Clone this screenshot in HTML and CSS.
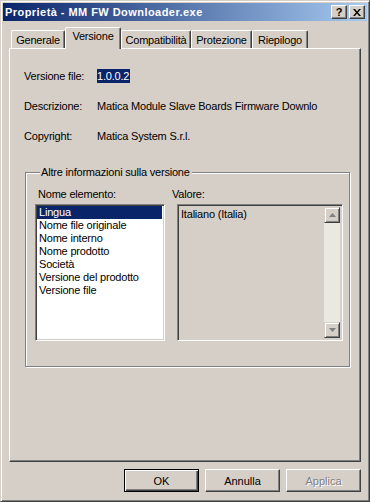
FILE: index.html
```html
<!DOCTYPE html>
<html lang="it">
<head>
  <meta charset="UTF-8" />
  <title>Proprietà - MM FW Downloader.exe</title>
  <link rel="stylesheet" href="styles.css">
</head>
<body>
  <div class="window">
    <div class="titlebar">
      <span class="title">Proprietà - MM FW Downloader.exe</span>
      <div class="title-buttons">
        <button class="cap-btn help">?</button>
        <button class="cap-btn close">
          <svg width="8" height="7" viewBox="0 0 8 7"><path d="M0 0h2l2 2.5L6 0h2L5 3.5 8 7H6L4 4.5 2 7H0l3-3.5z" fill="#000"/></svg>
        </button>
      </div>
    </div>

    <div class="tabs">
      <div class="tab t-gen">Generale</div>
      <div class="tab active t-ver">Versione</div>
      <div class="tab t-comp">Compatibilità</div>
      <div class="tab t-prot">Protezione</div>
      <div class="tab t-riep">Riepilogo</div>
    </div>

    <div class="panel">
      <div class="row">
        <span class="label">Versione file:</span>
        <span class="value"><span class="sel">1.0.0.2</span></span>
      </div>
      <div class="row">
        <span class="label">Descrizione:</span>
        <span class="value">Matica Module Slave Boards Firmware Downlo</span>
      </div>
      <div class="row">
        <span class="label">Copyright:</span>
        <span class="value">Matica System S.r.l.</span>
      </div>

      <fieldset class="group">
        <legend>Altre informazioni sulla versione</legend>
        <div class="cols">
          <div class="col-names">
            <div class="col-label">Nome elemento:</div>
            <ul class="listbox">
              <li class="selected">Lingua</li>
              <li>Nome file originale</li>
              <li>Nome interno</li>
              <li>Nome prodotto</li>
              <li>Società</li>
              <li>Versione del prodotto</li>
              <li>Versione file</li>
            </ul>
          </div>
          <div class="col-value">
            <div class="col-label">Valore:</div>
            <div class="valuebox">
              <div class="value-text">Italiano (Italia)</div>
              <div class="scrollbar">
                <div class="sb-btn">
                  <svg width="7" height="4" viewBox="0 0 7 4"><path d="M3.5 0L7 4H0z" fill="#808080"/></svg>
                </div>
                <div class="sb-track"></div>
                <div class="sb-btn">
                  <svg width="7" height="4" viewBox="0 0 7 4"><path d="M0 0h7L3.5 4z" fill="#808080"/></svg>
                </div>
              </div>
            </div>
          </div>
        </div>
      </fieldset>
    </div>

    <div class="actions">
      <button class="btn default">OK</button>
      <button class="btn">Annulla</button>
      <button class="btn disabled">Applica</button>
    </div>
  </div>
</body>
</html>
```

FILE: styles.css
```css
body {
  margin: 0;
  background: #d5cfc7;
  font-family: "Liberation Sans", Arial, sans-serif;
  font-size: 11px;
  line-height: 13px;
  letter-spacing: -0.2px;
  color: #000;
}
.window {
  width: 370px;
  height: 502px;
  box-sizing: border-box;
  padding: 2px;
  border: 1px solid;
  border-color: #d5cfc7 #404040 #404040 #d5cfc7;
  box-shadow: inset 1px 1px 0 #fff, inset -1px -1px 0 #808080;
  background: #d5cfc7;
}
.titlebar {
  height: 18px;
  display: flex;
  align-items: center;
  justify-content: space-between;
  padding: 0 2px 0 2px;
  background: linear-gradient(to right, #0a246a, #a6caf0);
}
.title {
  color: #fff;
  font-weight: bold;
  font-size: 11px;
  letter-spacing: 0.45px;
}
.title-buttons {
  display: flex;
  gap: 2px;
}
.cap-btn {
  width: 16px;
  height: 14px;
  padding: 0;
  margin: 0;
  display: flex;
  align-items: center;
  justify-content: center;
  background: #d5cfc7;
  border: 1px solid;
  border-color: #fff #404040 #404040 #fff;
  box-shadow: inset -1px -1px 0 #808080;
  font-family: "Liberation Sans", Arial, sans-serif;
  font-size: 11px;
  font-weight: bold;
  color: #000;
}
.tabs {
  display: flex;
  align-items: flex-end;
  height: 27px;
  margin-left: 8px;
}
.tab {
  box-sizing: border-box;
  height: 18px;
  padding-top: 3px;
  text-align: center;
  border-top: 1px solid #fff;
  border-left: 1px solid #fff;
  border-right: 1px solid #404040;
  box-shadow: inset -1px 0 0 #808080;
  border-radius: 2px 2px 0 0;
}
.tab.active {
  height: 22px;
  padding-top: 2px;
  margin-bottom: -1px;
  background: #d5cfc7;
  position: relative;
  z-index: 1;
}
.t-gen { width: 54px; }
.t-ver { width: 56px; }
.t-comp { width: 70px; }
.t-prot { width: 61px; }
.t-riep { width: 56px; }
.panel {
  box-sizing: border-box;
  width: 352px;
  height: 414px;
  margin-left: 6px;
  padding: 21px 14px 0 14px;
  border: 1px solid;
  border-color: #fff #404040 #404040 #fff;
  box-shadow: inset -1px -1px 0 #808080;
}
.row {
  display: flex;
  height: 13px;
  margin-bottom: 17px;
}
.label {
  width: 73px;
  flex: none;
}
.value {
  white-space: nowrap;
}
.sel {
  background: #0a246a;
  color: #fff;
  padding: 1px 1px 1px 0;
}
.group {
  margin: 23px 0 0 1px;
  width: 325px;
  height: 201px;
  box-sizing: border-box;
  padding: 9px 0 0 9px;
  border: 1px solid #808080;
  box-shadow: 1px 1px 0 #fff, inset 1px 1px 0 #fff;
}
.group legend {
  margin-left: 5px;
  padding: 0 2px 0 1px;
  background: #d5cfc7;
}
.cols {
  display: flex;
}
.col-names {
  width: 130px;
}
.col-value {
  margin-left: 7px;
  width: 171px;
}
.col-label {
  height: 13px;
  margin-bottom: 3px;
  padding-left: 3px;
}
.col-value .col-label {
  padding-left: 0;
}
.listbox,
.valuebox {
  box-sizing: border-box;
  height: 137px;
  margin: 0;
  padding: 0;
  border: 1px solid;
  border-color: #808080 #fff #fff #808080;
  box-shadow: inset 1px 1px 0 #404040, inset -1px -1px 0 #d5cfc7;
}
.listbox {
  list-style: none;
  background: #fff;
  padding: 1px 2px 0 1px;
}
.listbox li {
  height: 13px;
  padding-left: 2px;
  white-space: nowrap;
}
.listbox li.selected {
  background: #0a246a;
  color: #fff;
}
.valuebox {
  margin-left: 5px;
  display: flex;
  justify-content: space-between;
  padding: 2px 2px 2px 3px;
}
.value-text {
  padding-top: 1px;
}
.scrollbar {
  width: 16px;
  display: flex;
  flex-direction: column;
}
.sb-btn {
  box-sizing: border-box;
  height: 16px;
  display: flex;
  align-items: center;
  justify-content: center;
  background: #d5cfc7;
  border: 1px solid;
  border-color: #d5cfc7 #404040 #404040 #d5cfc7;
  box-shadow: inset 1px 1px 0 #fff, inset -1px -1px 0 #808080;
}
.sb-track {
  flex: 1;
  background: #ebe7e1;
}
.actions {
  display: flex;
  justify-content: flex-end;
  gap: 6px;
  margin-top: 7px;
  padding-right: 6px;
}
.btn {
  box-sizing: border-box;
  width: 75px;
  height: 23px;
  padding: 0;
  background: #d5cfc7;
  border: 1px solid;
  border-color: #fff #404040 #404040 #fff;
  box-shadow: inset -1px -1px 0 #808080;
  font-family: "Liberation Sans", Arial, sans-serif;
  font-size: 11px;
  color: #000;
}
.btn.default {
  border: 1px solid #000;
  box-shadow: inset 1px 1px 0 #fff, inset -1px -1px 0 #404040, inset -2px -2px 0 #808080;
}
.btn.disabled {
  color: #808080;
  text-shadow: 1px 1px 0 #fff;
}
```
